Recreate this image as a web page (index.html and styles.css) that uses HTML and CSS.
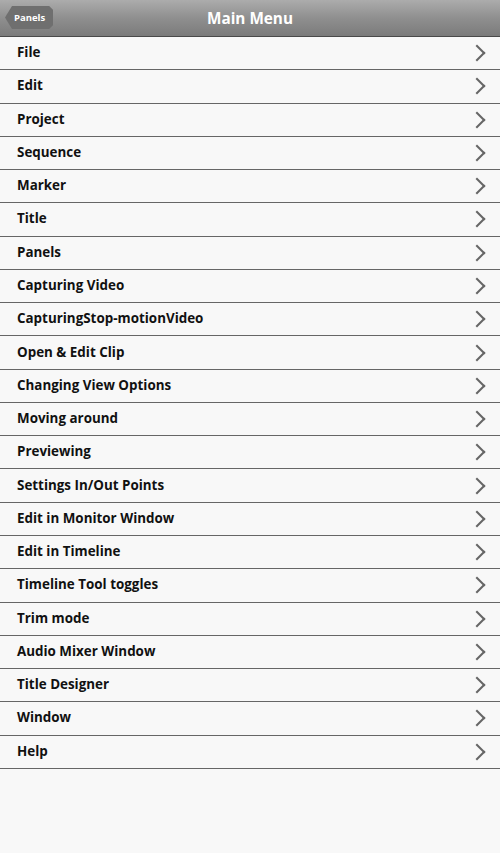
FILE: index.html
```html
<!DOCTYPE html>
<html lang="en">
<head>
  <meta charset="UTF-8">
  <meta name="viewport" content="width=device-width, initial-scale=1.0">
  <title>Main Menu</title>
  <link rel="stylesheet" href="styles.css">
</head>
<body>

  <header class="topbar">
    <button type="button" class="back-btn">Panels</button>
    <h1>Main Menu</h1>
  </header>

  <ul class="menu">
    <li>File</li>
    <li>Edit</li>
    <li>Project</li>
    <li>Sequence</li>
    <li>Marker</li>
    <li>Title</li>
    <li>Panels</li>
    <li>Capturing Video</li>
    <li>CapturingStop-motionVideo</li>
    <li>Open &amp; Edit Clip</li>
    <li>Changing View Options</li>
    <li>Moving around</li>
    <li>Previewing</li>
    <li>Settings In/Out Points</li>
    <li>Edit in Monitor Window</li>
    <li>Edit in Timeline</li>
    <li>Timeline Tool toggles</li>
    <li>Trim mode</li>
    <li>Audio Mixer Window</li>
    <li>Title Designer</li>
    <li>Window</li>
    <li>Help</li>
  </ul>

</body>
</html>
```

FILE: styles.css
```css
body {
  font-family: 'Open Sans', 'Roboto', sans-serif;
  background-color: #f8f8f8;
  color: #111;
  margin: 0;
}

.topbar {
  position: relative;
  height: 36px;
  display: flex;
  align-items: center;
  justify-content: center;
  background: linear-gradient(#acacac, #8f8f8f 50%, #7b7b7b);
  border-bottom: 1px solid #4a4a4a;
}

.topbar h1 {
  margin: 0;
  font-size: 15.3px;
  font-weight: bold;
  color: #fff;
}

/* back button with pointed left side */
.back-btn {
  position: absolute;
  left: 5px;
  top: 6px;
  height: 23px;
  padding: 0 8px 0 9px;
  border: none;
  background: #6f6f6f;
  color: #fff;
  font-family: inherit;
  font-size: 9.5px;
  font-weight: bold;
  clip-path: polygon(0 50%, 7px 0, calc(100% - 4px) 0, 100% 4px, 100% calc(100% - 4px), calc(100% - 4px) 100%, 7px 100%);
}

.menu {
  list-style: none;
  margin: 0;
  padding: 0;
}

.menu li {
  box-sizing: border-box;
  height: 33.27px;
  display: flex;
  align-items: center;
  padding: 0 17px 2px;
  font-size: 13.4px;
  font-weight: bold;
  border-bottom: 1px solid #666;
  position: relative;
}

.menu li::after {
  content: "";
  position: absolute;
  right: 17px;
  top: 50%;
  width: 10px;
  height: 10px;
  margin-top: -6px;
  border-top: 2.5px solid #666;
  border-right: 2.5px solid #666;
  transform: rotate(45deg);
}
```
